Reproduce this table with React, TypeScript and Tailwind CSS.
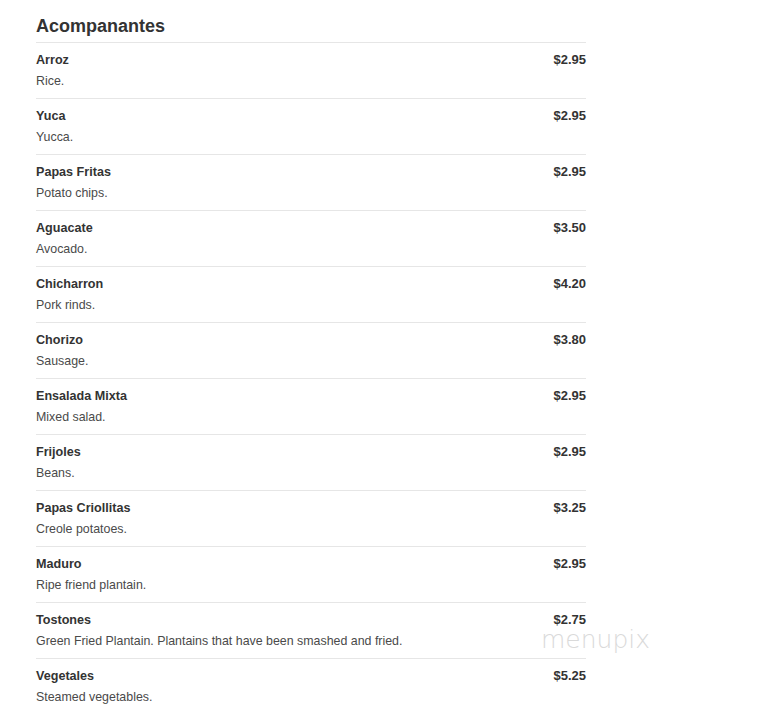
const items = [
  { name: "Arroz", desc: "Rice.", price: "$2.95" },
  { name: "Yuca", desc: "Yucca.", price: "$2.95" },
  { name: "Papas Fritas", desc: "Potato chips.", price: "$2.95" },
  { name: "Aguacate", desc: "Avocado.", price: "$3.50" },
  { name: "Chicharron", desc: "Pork rinds.", price: "$4.20" },
  { name: "Chorizo", desc: "Sausage.", price: "$3.80" },
  { name: "Ensalada Mixta", desc: "Mixed salad.", price: "$2.95" },
  { name: "Frijoles", desc: "Beans.", price: "$2.95" },
  { name: "Papas Criollitas", desc: "Creole potatoes.", price: "$3.25" },
  { name: "Maduro", desc: "Ripe friend plantain.", price: "$2.95" },
  { name: "Tostones", desc: "Green Fried Plantain. Plantains that have been smashed and fried.", price: "$2.75" },
  { name: "Vegetales", desc: "Steamed vegetables.", price: "$5.25" },
];

export default function App() {
  return (
    <div className="relative min-h-[724px] bg-white pl-[36px] font-['Liberation_Sans',Arial,sans-serif]">
      <div className="w-[550px]">
        <h1 className="pt-[15px] pb-[5px] text-[18px] leading-[22px] font-bold text-[#333] border-b border-[#e6e6e6]">
          Acompanantes
        </h1>
        {items.map((item) => (
          <div key={item.name} className="pt-[8px] pb-[8px] border-b border-[#e6e6e6] last:border-b-0">
            <div className="flex justify-between text-[12.6px] leading-[18px] font-bold text-[#333]">
              <span>{item.name}</span>
              <span className="text-[13px]">{item.price}</span>
            </div>
            <p className="mt-[3px] text-[12.4px] leading-[18px] text-[#4a4a4a]">{item.desc}</p>
          </div>
        ))}
      </div>

      {/* watermark */}
      <div className="absolute left-[541px] top-[626px] text-[25px] leading-[28px] font-light text-[#dadada] font-['DejaVu_Sans',sans-serif]">
        menupix
      </div>
    </div>
  );
}
